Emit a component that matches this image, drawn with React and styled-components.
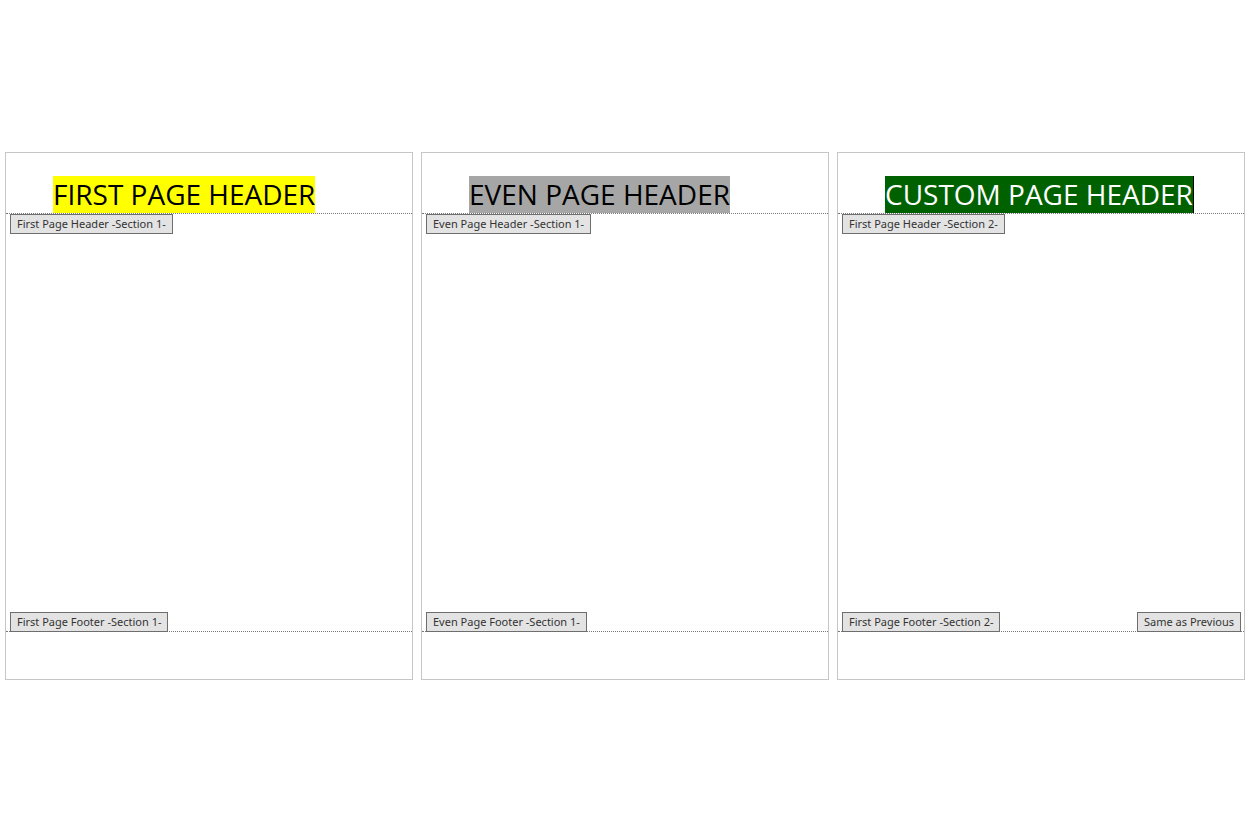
import React from 'react'
import styled, { createGlobalStyle } from 'styled-components'

const pages = [
  {
    title: 'FIRST PAGE HEADER',
    bg: '#ffff00',
    color: '#000',
    header: 'First Page Header -Section 1-',
    footer: 'First Page Footer -Section 1-',
  },
  {
    title: 'EVEN PAGE HEADER',
    bg: '#a6a6a6',
    color: '#000',
    header: 'Even Page Header -Section 1-',
    footer: 'Even Page Footer -Section 1-',
  },
  {
    title: 'CUSTOM PAGE HEADER',
    bg: '#006100',
    color: '#fff',
    caret: true,
    header: 'First Page Header -Section 2-',
    footer: 'First Page Footer -Section 2-',
    linked: 'Same as Previous',
  },
]

export default function App() {
  return (
    <>
      <GlobalStyle />
      <Spread>
        {pages.map((page) => (
          <Page key={page.header}>
            <HeaderArea>
              <Highlight $bg={page.bg} $color={page.color} $caret={page.caret}>
                {page.title}
              </Highlight>
            </HeaderArea>
            <TagRow>
              <Tag>{page.header}</Tag>
            </TagRow>
            <Body />
            <TagRow $footer>
              <Tag>{page.footer}</Tag>
              {page.linked && <Tag>{page.linked}</Tag>}
            </TagRow>
            <FooterArea />
          </Page>
        ))}
      </Spread>
    </>
  )
}

const GlobalStyle = createGlobalStyle`
  body {
    margin: 0;
    background: #fff;
    font-family: "Noto Sans", "Open Sans", sans-serif;
  }
`

const Spread = styled.div`
  display: flex;
  gap: 8px;
  padding: 152px 0 0 5px;
`

const Page = styled.div`
  border: 1px solid #c6c6c6;
  box-sizing: border-box;
  display: flex;
  flex-direction: column;
  height: 528px;
  width: 408px;
`

const HeaderArea = styled.div`
  border-bottom: 1px dotted #7a7a7a;
  display: flex;
  padding: 23px 0 0 47px;
`

const Highlight = styled.span`
  background: ${(p) => p.$bg};
  border-right: ${(p) => (p.$caret ? '1px solid #000' : '0')};
  color: ${(p) => p.$color};
  font-family: "Open Sans", "Noto Sans", sans-serif;
  font-size: 28px;
  height: 37px;
  line-height: 37px;
  white-space: nowrap;
`

const TagRow = styled.div`
  display: flex;
  justify-content: space-between;
  margin-bottom: ${(p) => (p.$footer ? '-1px' : '0')};
  padding: 0 3px 0 4px;
  position: relative;
`

const Tag = styled.div`
  background: #e3e3e3;
  border: 1px solid #6e6e6e;
  box-sizing: border-box;
  color: #333;
  font-size: 11px;
  height: 20px;
  line-height: 18px;
  padding: 0 6px;
  white-space: nowrap;
`

const Body = styled.div`
  flex: 1;
`

const FooterArea = styled.div`
  border-top: 1px dotted #7a7a7a;
  height: 47px;
`
